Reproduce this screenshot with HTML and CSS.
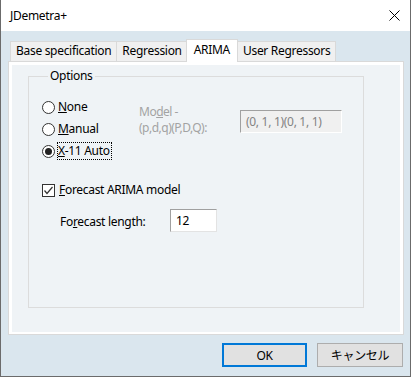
FILE: index.html
```html
<!DOCTYPE html>
<html lang="en">

<head>
    <meta charset="UTF-8">
    <title>JDemetra+</title>
    <link rel="stylesheet" href="styles.css">
</head>

<body>
    <div class="window">
        <div class="titlebar">
            <span class="title">JDemetra+</span>
            <svg class="close" width="11" height="11" viewBox="0 0 11 11">
                <path d="M0.5 0.5 L10.5 10.5 M10.5 0.5 L0.5 10.5" stroke="#000" stroke-width="1" fill="none" />
            </svg>
        </div>

        <div class="content">
            <div class="tabs">
                <div class="tab">Base specification</div>
                <div class="tab">Regression</div>
                <div class="tab active">ARIMA</div>
                <div class="tab">User Regressors</div>
            </div>

            <div class="panel">
                <div class="panel-inner">
                    <fieldset class="group">
                        <legend>Options</legend>

                        <div class="model-row">
                            <div class="radios">
                                <div class="radio-row">
                                    <span class="radio"></span>
                                    <span class="label"><u>N</u>one</span>
                                </div>
                                <div class="radio-row">
                                    <span class="radio"></span>
                                    <span class="label"><u>M</u>anual</span>
                                </div>
                                <div class="radio-row">
                                    <span class="radio checked"></span>
                                    <span class="label focus"><u>X</u>-11 Auto</span>
                                </div>
                            </div>
                            <div class="model-label">
                                <div>Mo<u>d</u>el -</div>
                                <div>(p,d,q)(P,D,Q):</div>
                            </div>
                            <div class="textbox disabled">(0, 1, 1)(0, 1, 1)</div>
                        </div>

                        <div class="check-row">
                            <span class="checkbox">
                                <svg width="11" height="11" viewBox="0 0 11 11">
                                    <path d="M1.5 5.5 L4 8.5 L9.5 2" stroke="#333" stroke-width="1.2" fill="none" />
                                </svg>
                            </span>
                            <span class="label"><u>F</u>orecast ARIMA model</span>
                        </div>

                        <div class="length-row">
                            <span class="length-label">Fo<u>r</u>ecast length:</span>
                            <div class="textbox">12</div>
                        </div>
                    </fieldset>
                </div>
            </div>

            <div class="buttons">
                <button class="btn default">OK</button>
                <button class="btn">キャンセル</button>
            </div>
        </div>
    </div>
</body>

</html>
```

FILE: styles.css
```css
* {
    box-sizing: border-box;
}

body {
    margin: 0;
    width: 411px;
    height: 377px;
    overflow: hidden;
    background: #5a5a5a;
    font-family: "Noto Sans", "Noto Sans CJK JP", sans-serif;
    font-size: 12px;
    letter-spacing: -0.3px;
    color: #000;
}

.window {
    width: 411px;
    height: 377px;
    display: flex;
    flex-direction: column;
    background: #dae6ee;
    border-left: 1px solid #6b6b6b;
    border-right: 1px solid #6b6b6b;
    border-bottom: 1px solid #6b6b6b;
}

.titlebar {
    height: 31px;
    flex-shrink: 0;
    background: #fff;
    display: flex;
    align-items: center;
    justify-content: space-between;
    padding: 0 10px 0 9px;
}

.title {
    line-height: 16px;
}

.close {
    display: block;
}

.content {
    flex: 1;
    display: flex;
    flex-direction: column;
    padding: 8px 6px 0 7px;
}

/* tab strip */
.tabs {
    display: flex;
    align-items: flex-end;
    height: 23px;
    margin: 0 0 -1px 2px;
    position: relative;
    z-index: 1;
}

.tab {
    height: 20px;
    margin-bottom: 1px;
    padding: 0 5px;
    line-height: 18px;
    background: #f0f0f0;
    border: 1px solid #d9d9d9;
    border-bottom: none;
    margin-right: -1px;
    white-space: nowrap;
}

.tab.active {
    height: 23px;
    margin: 0 -1px 0 -1px;
    padding: 0 7px;
    line-height: 20px;
    background: #fff;
}

/* page */
.panel {
    height: 274px;
    border: 1px solid #d9d9d9;
    background: #fff;
    padding: 3px 3px 2px 3px;
}

.panel-inner {
    height: 100%;
    background: #eff3f6;
    padding: 3px 36px 0 16px;
}

.group {
    margin: 0;
    height: 240px;
    border: 1px solid #dcdcdc;
    padding: 12px 0 0 13px;
    min-width: 0;
}

.group legend {
    margin-left: 6px;
    padding: 0 2px;
    line-height: 16px;
}

.model-row {
    display: flex;
    align-items: flex-start;
}

.radios {
    width: 97px;
    display: flex;
    flex-direction: column;
}

.radio-row {
    height: 22px;
    display: flex;
    align-items: center;
    gap: 2px;
}

.radio {
    width: 13px;
    height: 13px;
    border: 1px solid #333;
    border-radius: 50%;
    background: #fff;
    display: flex;
    align-items: center;
    justify-content: center;
}

.radio.checked::after {
    content: '';
    width: 7px;
    height: 7px;
    border-radius: 50%;
    background: #222;
}

.label {
    line-height: 16px;
    border: 1px dotted transparent;
    white-space: nowrap;
}

.label.focus {
    border-color: #000;
    padding-right: 1px;
}

.model-label {
    width: 101px;
    margin-top: 8px;
    line-height: 16px;
    color: #a3a3a3;
    letter-spacing: -0.5px;
    white-space: nowrap;
}

.textbox {
    height: 23px;
    padding: 0 5px;
    line-height: 21px;
    background: #fff;
    border-top: 1px solid #a0a0a0;
    border-left: 1px solid #a0a0a0;
    border-right: 1px solid #e3e3e3;
    border-bottom: 1px solid #e3e3e3;
}

.textbox.disabled {
    width: 102px;
    margin-top: 14px;
    background: #f0f0f0;
    color: #838383;
    border-right-color: #fff;
    border-bottom-color: #fff;
    white-space: nowrap;
}

.check-row {
    height: 22px;
    margin-top: 17px;
    display: flex;
    align-items: center;
    gap: 3px;
}

.checkbox {
    width: 13px;
    height: 13px;
    border: 1px solid #333;
    background: #fff;
    display: flex;
    align-items: center;
    justify-content: center;
}

.checkbox svg {
    display: block;
}

.length-row {
    margin-top: 8px;
    margin-left: 18px;
    display: flex;
    align-items: flex-start;
}

.length-label {
    width: 110px;
    padding-top: 5px;
    line-height: 16px;
}

.length-row .textbox {
    width: 47px;
}

/* dialog buttons */
.buttons {
    display: flex;
    justify-content: flex-end;
    gap: 10px;
    margin: 8px 1px 0 0;
}

.btn {
    width: 85px;
    height: 24px;
    padding: 0;
    font-family: "Noto Sans", "Noto Sans CJK JP", sans-serif;
    font-size: 12px;
    letter-spacing: -0.3px;
    color: #000;
    background: #e1e1e1;
    border: 1px solid #adadad;
}

.btn + .btn {
    width: 86px;
}

.btn.default {
    border: 2px solid #0078d7;
}
```
